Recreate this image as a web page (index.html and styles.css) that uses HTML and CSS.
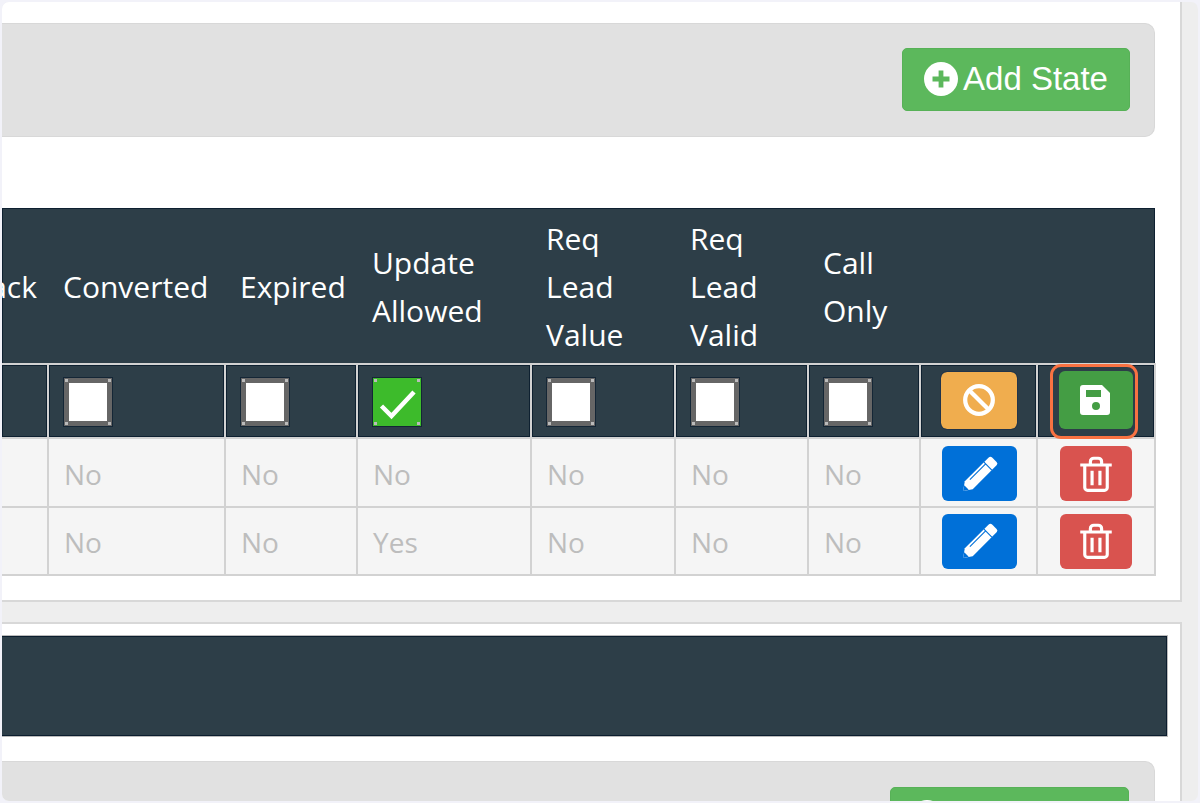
FILE: index.html
```html
<!DOCTYPE html>
<html lang="en">
<head>
<meta charset="utf-8">
<title>States</title>
<link rel="stylesheet" href="styles.css">
</head>
<body>
<div class="frame">
  <section class="panel panel-top">
    <div class="well">
      <button class="add add-state"><svg class="plus" viewBox="0 0 32 32"><circle cx="16" cy="16" r="16" fill="#fff"/><path d="M16 8v16M8 16h16" stroke="#5cb85c" stroke-width="4.500"/></svg>Add State</button>
    </div>
    <table class="grid">
      <thead>
        <tr class="head">
          <th class="c1"><div class="clip">Callback</div></th>
          <th class="c2">Converted</th>
          <th class="c3">Expired</th>
          <th class="c4">Update<br>Allowed</th>
          <th class="c5">Req<br>Lead<br>Value</th>
          <th class="c6">Req<br>Lead<br>Valid</th>
          <th class="c7">Call<br>Only</th>
          <th class="c8"></th>
          <th class="c9"></th>
        </tr>
      </thead>
      <tbody>
        <tr class="edit">
          <td></td>
          <td><span class="check"></span></td>
          <td><span class="check"></span></td>
          <td><span class="check on"><svg viewBox="0 0 48 48"><path d="M8.500 28l10 10L41 14" fill="none" stroke="#fff" stroke-width="4.500"/></svg></span></td>
          <td><span class="check"></span></td>
          <td><span class="check"></span></td>
          <td><span class="check"></span></td>
          <td class="act"><button class="btn cancel"><svg class="ico ban" viewBox="0 0 32 32"><circle cx="16" cy="16" r="13" fill="none" stroke="#fff" stroke-width="4"/><path d="M7 7l18 18" stroke="#fff" stroke-width="4"/></svg></button></td>
          <td class="act save-cell"><button class="btn save"><svg class="ico" viewBox="0 0 32 32"><path fill="#fff" fill-rule="evenodd" d="M3 1h19l8 8v19a3 3 0 0 1-3 3H3a3 3 0 0 1-3-3V4a3 3 0 0 1 3-3zM6 6v7h15V6zM16 18a4 4 0 1 0 0 8 4 4 0 0 0 0-8z"/></svg></button><span class="ring"></span></td>
        </tr>
        <tr class="row-a">
          <td></td><td>No</td><td>No</td><td>No</td><td>No</td><td>No</td><td>No</td>
          <td class="act"><button class="btn blue"><svg class="ico pen" viewBox="0 0 32 32"><path fill="#fff" d="M23.500 1.500a2.500 2.500 0 0 1 3.500 0l3.500 3.500a2.500 2.500 0 0 1 0 3.500L9.500 29.500 1 31l1.500-8.500z"/><path d="M19.500 5.500l7 7M7 21L21 7" fill="none" stroke="#0070d8" stroke-width="1"/><path d="M2 26l4 4-5 1z" fill="#0070d8"/></svg></button></td>
          <td class="act"><button class="btn red"><svg class="ico trash" viewBox="0 0 32 32"><path fill="none" stroke="#fff" stroke-width="2.800" d="M2 8h28M6 8v20a2.500 2.500 0 0 0 2.500 2.500h15A2.500 2.500 0 0 0 26 28V8M11 8V5a3 3 0 0 1 3-3h4a3 3 0 0 1 3 3v3M12.500 13v13M19.500 13v13"/></svg></button></td>
        </tr>
        <tr class="row-b">
          <td></td><td>No</td><td>No</td><td>Yes</td><td>No</td><td>No</td><td>No</td>
          <td class="act"><button class="btn blue"><svg class="ico pen" viewBox="0 0 32 32"><path fill="#fff" d="M23.500 1.500a2.500 2.500 0 0 1 3.500 0l3.500 3.500a2.500 2.500 0 0 1 0 3.500L9.500 29.500 1 31l1.500-8.500z"/><path d="M19.500 5.500l7 7M7 21L21 7" fill="none" stroke="#0070d8" stroke-width="1"/><path d="M2 26l4 4-5 1z" fill="#0070d8"/></svg></button></td>
          <td class="act"><button class="btn red"><svg class="ico trash" viewBox="0 0 32 32"><path fill="none" stroke="#fff" stroke-width="2.800" d="M2 8h28M6 8v20a2.500 2.500 0 0 0 2.500 2.500h15A2.500 2.500 0 0 0 26 28V8M11 8V5a3 3 0 0 1 3-3h4a3 3 0 0 1 3 3v3M12.500 13v13M19.500 13v13"/></svg></button></td>
        </tr>
      </tbody>
    </table>
  </section>
  <section class="panel panel-bottom">
    <div class="bar"></div>
    <div class="well well-low">
      <div class="add add-other"><svg class="plus" viewBox="0 0 32 32"><circle cx="16" cy="16" r="16" fill="#fff"/><path d="M16 8v16M8 16h16" stroke="#5cb85c" stroke-width="4.500"/></svg></div>
    </div>
  </section>
</div>
</body>
</html>
```
FILE: styles.css
```css
* { box-sizing: border-box; }
html, body { margin: 0; height: 100%; overflow: hidden; background: #f2f2f9; }
body { padding: 2px; }
.frame {
  height: 799px;
  background: #eeeeee;
  border-radius: 7px;
  overflow: hidden;
  padding-right: 16px;
  font-family: "Open Sans", "Liberation Sans", sans-serif;
}
.panel {
  background: #fff;
  border-right: 2px solid #d8d8d8;
  border-bottom: 2px solid #d8d8d8;
}
.panel-top { height: 600px; padding: 21px 25px 0 0; }
.panel-bottom {
  height: 200px;
  margin-top: 20px;
  border-top: 2px solid #d8d8d8;
  padding-top: 12px;
}
.well {
  height: 114px;
  background: #e1e1e1;
  border: 1px solid #d8d8d8;
  border-left: 0;
  border-radius: 0 10px 10px 0;
  display: flex;
  justify-content: flex-end;
  padding: 24px 24px 0 0;
}
.well-low { margin: 25px 25px 0 0; height: 130px; padding: 25px 25px 0 0; }
.add {
  height: 63px;
  background: #5cb85c;
  border: 1px solid #57b157;
  border-radius: 5px;
  color: #fff;
  font: 33px "Liberation Sans", Arial, sans-serif;
  display: flex;
  align-items: center;
  justify-content: center;
  gap: 5px;
  padding: 0 0 2px;
}
.add-state { width: 228px; }
.add-other { width: 239px; justify-content: flex-start; align-items: flex-start; padding: 12px 0 0 19px; }
.plus { width: 34px; height: 34px; }
.grid {
  width: 1153px;
  margin-top: 71px;
  table-layout: fixed;
  border-collapse: collapse;
  font-size: 28px;
}
.c1 { width: 46px; }
.c2 { width: 177px; }
.c3 { width: 132px; }
.c4 { width: 174px; }
.c5 { width: 144px; }
.c6 { width: 133px; }
.c7 { width: 112px; }
.c8 { width: 117px; }
.c9 { width: 118px; }
.head { height: 156px; background: #2d3e48; box-shadow: inset 0 0 0 1px #0e2030; }
.head th {
  color: #fff;
  font-size: 30px;
  font-weight: 400;
  text-align: left;
  line-height: 48px;
  padding: 2px 0 0 15px;
}
.head .c1 { padding: 2px 11px 0 0; }
.clip { display: flex; justify-content: flex-end; overflow: hidden; white-space: nowrap; }
.grid td {
  border: 2px solid #d2d2d2;
  padding: 2px 0 0 15px;
  color: #bdbdbd;
  background: #f5f5f5;
}
.grid td:first-child { border-left: 0; }
.edit { height: 74px; }
.row-a { height: 69px; }
.row-b { height: 68px; }
.grid .edit td { background: #2d3e48; box-shadow: inset 0 0 0 1px #0e2030; }
.check {
  display: block;
  position: relative;
  width: 48px;
  height: 48px;
  background: #fff;
  border: 5px solid #666;
  outline: 1px solid #142636;
}
.check::after {
  content: "";
  position: absolute;
  inset: -5px;
  background:
    radial-gradient(circle 2px at 2.500px 2.500px, #bbb 99%, transparent),
    radial-gradient(circle 2px at calc(100% - 2.500px) 2.500px, #bbb 99%, transparent),
    radial-gradient(circle 2px at 2.500px calc(100% - 2.500px), #bbb 99%, transparent),
    radial-gradient(circle 2px at calc(100% - 2.500px) calc(100% - 2.500px), #bbb 99%, transparent);
}
.check.on { background: #3dbb2b; border: 0; }
.check.on::after { inset: 0; }
.check svg { display: block; width: 48px; height: 48px; }
.grid td.act { padding: 0; }
.grid .row-a td.act { padding-top: 2px; }
.grid .edit td.act { padding-bottom: 2px; }
.btn {
  display: flex;
  align-items: center;
  justify-content: center;
  margin: 0 auto;
  padding: 0;
  border: 0;
  border-radius: 6px;
}
.ico { width: 32px; height: 32px; }
.ban { width: 34px; height: 34px; }
.cancel { width: 76px; height: 57px; background: #f0ad4e; outline: 1px solid #22344a; }
.save { width: 74px; height: 58px; background: #449d44; }
.blue { width: 75px; height: 55px; background: #0070d8; margin-left: 21px; }
.red { width: 72px; height: 55px; background: #d9534f; }
.pen { width: 36px; height: 36px; }
.trash { width: 36px; height: 36px; }
.save-cell { position: relative; }
.ring {
  position: absolute;
  left: 12px;
  top: -1px;
  width: 88px;
  height: 75px;
  border: 3px solid #f97242;
  border-radius: 11px;
}
.bar {
  height: 100px;
  margin-right: 13px;
  background: #2d3e48;
  border: 1px solid #0b1d2e;
  border-left: 0;
  box-shadow: 0 0 0 1px #bbb;
}
```
